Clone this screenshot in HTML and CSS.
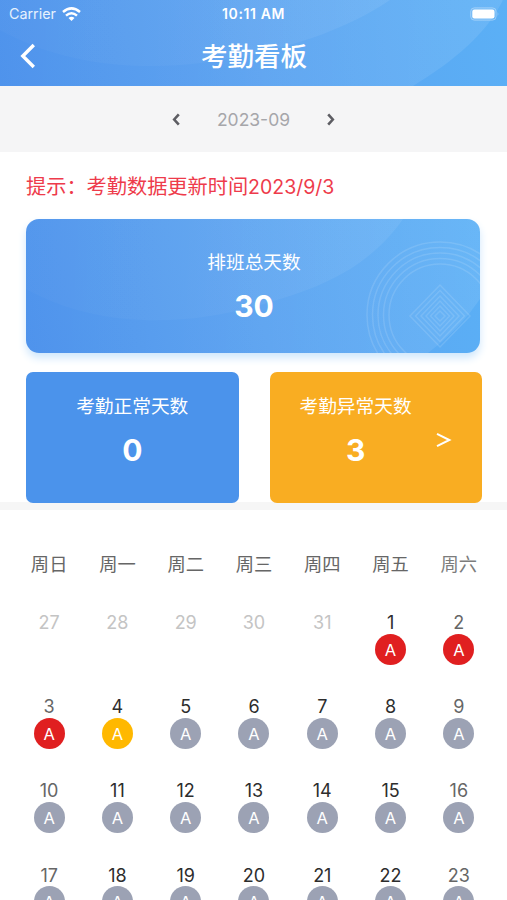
FILE: index.html
```html
<!DOCTYPE html>
<html lang="zh-CN">
<head>
    <meta charset="UTF-8">
    <meta name="viewport" content="width=device-width, initial-scale=1.0">
    <title>考勤看板</title>
    <link rel="stylesheet" href="styles.css">
</head>
<body>
    <header class="header">
        <svg class="waves" viewBox="0 0 507 86" preserveAspectRatio="none">
            <defs>
                <linearGradient id="shine" gradientUnits="userSpaceOnUse" x1="0" y1="0" x2="480" y2="0">
                    <stop offset="0" stop-color="#fff" stop-opacity="0.02"/>
                    <stop offset="0.4" stop-color="#fff" stop-opacity="0.035"/>
                    <stop offset="1" stop-color="#fff" stop-opacity="0.09"/>
                </linearGradient>
            </defs>
            <path d="M0 0H503C486 34 455 60 413 86H0Z" fill="url(#shine)"/>
            <path d="M0 0H390C345 30 300 43 255 54C170 72 80 74 0 30Z" fill="url(#shine)"/>
        </svg>
        <div class="status-bar">
            <div class="carrier">
                <span>Carrier</span>
                <svg width="19" height="14" viewBox="0 0 19 14" fill="none" stroke="#fff" stroke-width="2.5">
                    <path d="M1 5Q9.5 -2.2 18 5"/>
                    <path d="M4 8.6Q9.5 3.8 15 8.6"/>
                    <path d="M6.5 10.9Q9.5 8.4 12.5 10.9L9.5 14Z" fill="#fff" stroke="none"/>
                </svg>
            </div>
            <span class="time">10:11 AM</span>
            <div class="battery-box">
                <svg width="30" height="14" viewBox="0 0 30 14">
                    <rect x="0.6" y="0.8" width="25.6" height="12.4" rx="3.8" fill="#fff" fill-opacity="0.1" stroke="#fff" stroke-opacity="0.3"/>
                    <rect x="2.3" y="2.5" width="22.2" height="9" rx="2.2" fill="#fff"/>
                    <path d="M27.6 4.8Q29.3 7 27.6 9.2Z" fill="#fff" fill-opacity="0.35"/>
                </svg>
            </div>
        </div>
        <div class="nav-bar">
            <svg class="back" width="16" height="26" viewBox="0 0 16 26" fill="none" stroke="#fff" stroke-width="3.4">
                <path d="M13.8 2L2.8 13L13.8 24"/>
            </svg>
            <h1>考勤看板</h1>
        </div>
    </header>

    <!-- 月份切换 -->
    <div class="month-bar">
        <svg width="8" height="13" viewBox="0 0 8 13" fill="none" stroke="#5d5d63" stroke-width="2.6">
            <path d="M6.8 1.4L2.2 6.5L6.8 11.6"/>
        </svg>
        <span class="month">2023-09</span>
        <svg width="8" height="13" viewBox="0 0 8 13" fill="none" stroke="#5d5d63" stroke-width="2.6">
            <path d="M1.2 1.4L5.8 6.5L1.2 11.6"/>
        </svg>
    </div>

    <main class="summary">
        <p class="tip">提示：考勤数据更新时间<span class="date">2023/9/3</span></p>
        <div class="total-card">
            <svg class="waves" viewBox="0 0 454 134">
                <path d="M0 0H454V80Q434 110 402 134H0Z" fill="url(#shine)"/>
                <path d="M0 0H377C345 46 300 66 254 80C175 106 80 114 0 70Z" fill="url(#shine)"/>
                <g fill="none" stroke="#fff" stroke-opacity="0.12" stroke-width="1.5">
                    <circle cx="414" cy="96" r="73"/>
                    <circle cx="414" cy="96" r="67.5"/>
                    <circle cx="414" cy="96" r="62"/>
                    <circle cx="414" cy="96" r="56.5"/>
                    <circle cx="414" cy="96" r="51"/>
                    <path d="M414 66L444 97L414 128L384 97Z"/>
                    <path d="M414 71.5L438.5 97L414 122.5L389.5 97Z"/>
                    <path d="M414 77L433 97L414 117L395 97Z"/>
                    <path d="M414 82L428 97L414 112L400 97Z"/>
                    <path d="M414 87L423.5 97L414 107L404.5 97Z"/>
                    <path d="M414 92L419 97L414 102L409 97Z"/>
                </g>
            </svg>
            <div class="label">排班总天数</div>
            <div class="value">30</div>
        </div>
        <div class="cards">
            <div class="card normal">
                <div class="stat">
                    <div class="label">考勤正常天数</div>
                    <div class="value">0</div>
                </div>
            </div>
            <div class="card abnormal">
                <div class="stat">
                    <div class="label">考勤异常天数</div>
                    <div class="value">3</div>
                </div>
                <svg class="more" width="16" height="16" viewBox="0 0 16 16" fill="none" stroke="#fff" stroke-width="2">
                    <path d="M1 1.8L13.4 8L1 14.2"/>
                </svg>
            </div>
        </div>
    </main>

    <section class="calendar">
        <div class="week">
            <span>周日</span><span>周一</span><span>周二</span><span>周三</span><span>周四</span><span>周五</span><span class="light">周六</span>
        </div>
        <div class="days" id="days"></div>
    </section>

    <script>
        const days = document.getElementById("days");
        const status = { 1: "red", 2: "red", 3: "red", 4: "yellow" };

        function addDay(number, index, outside) {
            const day = document.createElement("div");
            day.className = "day";
            if (index % 7 === 0 || index % 7 === 6) {
                day.classList.add("weekend");
            }
            if (outside) {
                day.classList.add("outside");
                day.innerHTML = `<span class="number">${number}</span>`;
            } else {
                day.innerHTML = `
                    <span class="number">${number}</span>
                    <span class="badge ${status[number] || ""}">A</span>
                `;
            }
            days.appendChild(day);
        }

        for (let i = 0; i < 5; i++) {
            addDay(27 + i, i, true);
        }
        for (let n = 1; n <= 23; n++) {
            addDay(n, n + 4, false);
        }
    </script>
</body>
</html>
```
FILE: styles.css
```css
body, h1, p {
    margin: 0;
    padding: 0;
}

* {
    box-sizing: border-box;
}

body {
    height: 900px;
    overflow: hidden;
    font-family: Inter, "Noto Sans CJK SC", sans-serif;
    background-color: #ffffff;
    color: #2d2d2d;
}

svg {
    display: block;
    flex-shrink: 0;
}

/* 顶部导航 */
.header {
    position: relative;
    height: 86px;
    color: #ffffff;
    background: linear-gradient(75deg, #4b91ec 0%, #5aa2f0 50%, #5bb0f6 100%);
}

.waves {
    position: absolute;
    top: 0;
    left: 0;
    width: 100%;
    height: 100%;
}

.status-bar {
    position: relative;
    display: grid;
    grid-template-columns: 1fr auto 1fr;
    align-items: center;
    height: 27px;
    padding: 0 7px 0 9px;
}

.carrier {
    display: flex;
    align-items: center;
    gap: 6px;
    font-size: 14.3px;
    color: #e6f1fd;
}

.time {
    margin-left: -2px;
    font-size: 14px;
    font-weight: 600;
    letter-spacing: 0.6px;
}

.battery-box {
    display: flex;
    justify-content: flex-end;
}

.nav-bar {
    position: relative;
    display: grid;
    grid-template-columns: 36px 1fr 36px;
    align-items: center;
    height: 58px;
    padding: 0 0 0 20px;
}

.nav-bar h1 {
    font-size: 26.5px;
    line-height: 58px;
    font-weight: 500;
    text-align: center;
    margin-left: -19px;
}

/* 月份 */
.month-bar {
    display: flex;
    justify-content: center;
    align-items: center;
    gap: 37px;
    height: 66px;
    background-color: #f5f5f6;
}

.month {
    padding-top: 1px;
    font-size: 17.5px;
    color: #a6a6aa;
}

/* 统计 */
.summary {
    height: 358px;
    padding: 20px 25px 0 26px;
    background: linear-gradient(#f6f6f6, #f6f6f6) bottom / 100% 8px no-repeat;
}

.tip {
    height: 28px;
    line-height: 29px;
    font-size: 20.2px;
    color: #ee3b4b;
    white-space: nowrap;
}

.tip .date {
    font-size: 19.5px;
}

.total-card {
    position: relative;
    width: 454px;
    height: 134px;
    margin-top: 19px;
    padding: 30px 0 0 2px;
    overflow: hidden;
    border-radius: 13px;
    color: #ffffff;
    text-align: center;
    background: linear-gradient(75deg, #4b91ec 0%, #5aa2f0 50%, #5bb0f6 100%);
    box-shadow: 0 5px 9px #cfe7fc;
}

.total-card .label,
.total-card .value {
    position: relative;
}

.label {
    font-size: 18.7px;
    line-height: 28px;
}

.value {
    margin-top: 11px;
    font-size: 30px;
    line-height: 36px;
    font-weight: 700;
}

.cards {
    display: flex;
    justify-content: space-between;
    width: 456px;
    margin-top: 19px;
}

.card {
    display: flex;
    width: 212.5px;
    height: 130.5px;
    padding-top: 21px;
    border-radius: 7px;
    color: #ffffff;
    text-align: center;
}

.normal {
    justify-content: center;
    background-color: #4b93eb;
}

.abnormal {
    padding-left: 30px;
    background-color: #f9ad22;
}

.more {
    margin: 39px 0 0 24px;
}

/* 日历 */
.calendar {
    padding: 40px 14px 0 15px;
}

.week {
    display: grid;
    grid-template-columns: repeat(7, 1fr);
    line-height: 28px;
    font-size: 18.3px;
    text-align: center;
    color: #666666;
}

.week .light {
    color: #7c7c7c;
}

.days {
    display: grid;
    grid-template-columns: repeat(7, 1fr);
    grid-auto-rows: 84.2px;
    margin-top: 33px;
}

.day {
    display: flex;
    flex-direction: column;
    align-items: center;
}

.number {
    height: 22.5px;
    line-height: 23px;
    font-size: 18px;
}

.weekend .number {
    color: #666666;
}

.outside .number {
    color: #c4c4c4;
}

.badge {
    width: 31px;
    height: 31px;
    line-height: 33px;
    border-radius: 50%;
    font-size: 16.5px;
    text-align: center;
    color: #ffffff;
    background-color: #9ca2b4;
}

.badge.red {
    background-color: #e01f20;
}

.badge.yellow {
    background-color: #ffb800;
}
```
